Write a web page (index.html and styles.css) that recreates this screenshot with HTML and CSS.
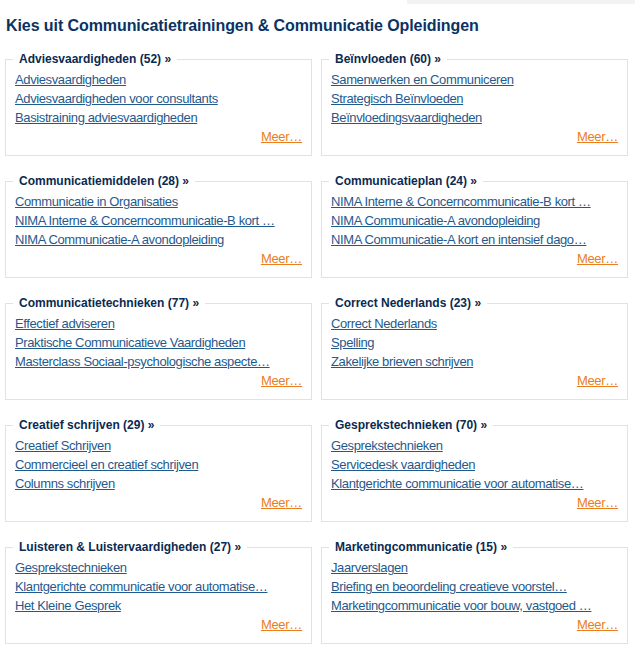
FILE: index.html
```html
<!DOCTYPE html>
<html>
<head>
<meta charset="utf-8">
<link rel="stylesheet" href="styles.css">
</head>
<body>
<div class="topbar"><div class="topbar-fill"></div></div>
<div class="page">
  <h1 class="title">Kies uit Communicatietrainingen &amp; Communicatie Opleidingen</h1>
  <div class="grid">
    <fieldset class="cat">
      <legend class="cat-head">Adviesvaardigheden (52) »</legend>
      <a class="item" href="#">Adviesvaardigheden</a>
      <a class="item" href="#">Adviesvaardigheden voor consultants</a>
      <a class="item" href="#">Basistraining adviesvaardigheden</a>
      <div class="more-row"><a class="more" href="#">Meer…</a></div>
    </fieldset>
    <fieldset class="cat">
      <legend class="cat-head">Beïnvloeden (60) »</legend>
      <a class="item" href="#">Samenwerken en Communiceren</a>
      <a class="item" href="#">Strategisch Beïnvloeden</a>
      <a class="item" href="#">Beïnvloedingsvaardigheden</a>
      <div class="more-row"><a class="more" href="#">Meer…</a></div>
    </fieldset>
    <fieldset class="cat">
      <legend class="cat-head">Communicatiemiddelen (28) »</legend>
      <a class="item" href="#">Communicatie in Organisaties</a>
      <a class="item" href="#">NIMA Interne &amp; Concerncommunicatie-B kort …</a>
      <a class="item" href="#">NIMA Communicatie-A avondopleiding</a>
      <div class="more-row"><a class="more" href="#">Meer…</a></div>
    </fieldset>
    <fieldset class="cat">
      <legend class="cat-head">Communicatieplan (24) »</legend>
      <a class="item" href="#">NIMA Interne &amp; Concerncommunicatie-B kort …</a>
      <a class="item" href="#">NIMA Communicatie-A avondopleiding</a>
      <a class="item" href="#">NIMA Communicatie-A kort en intensief dago…</a>
      <div class="more-row"><a class="more" href="#">Meer…</a></div>
    </fieldset>
    <fieldset class="cat">
      <legend class="cat-head">Communicatietechnieken (77) »</legend>
      <a class="item" href="#">Effectief adviseren</a>
      <a class="item" href="#">Praktische Communicatieve Vaardigheden</a>
      <a class="item" href="#">Masterclass Sociaal-psychologische aspecte…</a>
      <div class="more-row"><a class="more" href="#">Meer…</a></div>
    </fieldset>
    <fieldset class="cat">
      <legend class="cat-head">Correct Nederlands (23) »</legend>
      <a class="item" href="#">Correct Nederlands</a>
      <a class="item" href="#">Spelling</a>
      <a class="item" href="#">Zakelijke brieven schrijven</a>
      <div class="more-row"><a class="more" href="#">Meer…</a></div>
    </fieldset>
    <fieldset class="cat">
      <legend class="cat-head">Creatief schrijven (29) »</legend>
      <a class="item" href="#">Creatief Schrijven</a>
      <a class="item" href="#">Commercieel en creatief schrijven</a>
      <a class="item" href="#">Columns schrijven</a>
      <div class="more-row"><a class="more" href="#">Meer…</a></div>
    </fieldset>
    <fieldset class="cat">
      <legend class="cat-head">Gesprekstechnieken (70) »</legend>
      <a class="item" href="#">Gesprekstechnieken</a>
      <a class="item" href="#">Servicedesk vaardigheden</a>
      <a class="item" href="#">Klantgerichte communicatie voor automatise…</a>
      <div class="more-row"><a class="more" href="#">Meer…</a></div>
    </fieldset>
    <fieldset class="cat">
      <legend class="cat-head">Luisteren &amp; Luistervaardigheden (27) »</legend>
      <a class="item" href="#">Gesprekstechnieken</a>
      <a class="item" href="#">Klantgerichte communicatie voor automatise…</a>
      <a class="item" href="#">Het Kleine Gesprek</a>
      <div class="more-row"><a class="more" href="#">Meer…</a></div>
    </fieldset>
    <fieldset class="cat">
      <legend class="cat-head">Marketingcommunicatie (15) »</legend>
      <a class="item" href="#">Jaarverslagen</a>
      <a class="item" href="#">Briefing en beoordeling creatieve voorstel…</a>
      <a class="item" href="#">Marketingcommunicatie voor bouw, vastgoed …</a>
      <div class="more-row"><a class="more" href="#">Meer…</a></div>
    </fieldset>
  </div>
</div>
</body>
</html>
```

FILE: styles.css
```css
html, body {
  margin: 0;
  padding: 0;
  background: #ffffff;
}

body {
  font-family: "Liberation Sans", Arial, Helvetica, sans-serif;
  color: #0c2d55;
}

.topbar {
  display: flex;
  justify-content: flex-end;
  padding-right: 2px;
}

.topbar-fill {
  width: 228px;
  height: 4px;
  background: #f2f3f5;
}

.page {
  padding: 0 0 0 5px;
}

.title {
  margin: 12px 0 16px 1px;
  font-size: 16px;
  line-height: 19px;
  font-weight: bold;
  letter-spacing: -0.08px;
  color: #0b3263;
}

.grid {
  display: grid;
  grid-template-columns: 307px 307px;
  column-gap: 9px;
  row-gap: 17px;
}

.cat {
  margin: 0;
  padding: 3px 9px 9px 9px;
  border: 1px solid #dce3e9;
  display: flex;
  flex-direction: column;
  align-items: flex-start;
  min-width: 0;
}

.cat-head {
  margin-left: -2px;
  padding: 0 6px;
  font-size: 12px;
  line-height: 16px;
  font-weight: bold;
  color: #0a2a50;
}

.item {
  font-size: 13px;
  line-height: 19px;
  letter-spacing: -0.38px;
  color: #1f5a8d;
  text-decoration: underline;
  white-space: nowrap;
}

.more-row {
  align-self: stretch;
  display: flex;
  justify-content: flex-end;
}

.more {
  font-size: 13px;
  line-height: 19px;
  letter-spacing: -0.3px;
  color: #ea7d1c;
  text-decoration: underline;
}
```
